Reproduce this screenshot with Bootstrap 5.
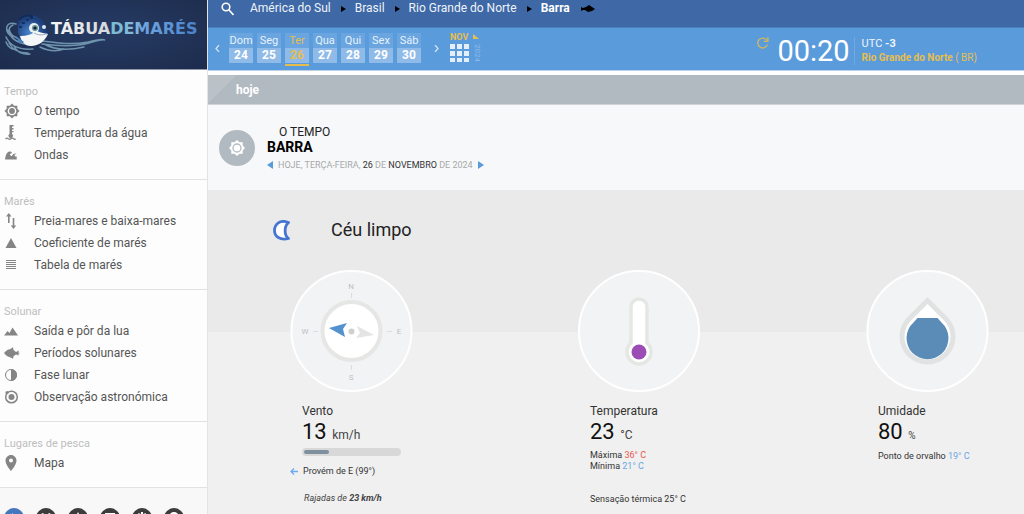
<!DOCTYPE html>
<html lang="pt">
<head>
<meta charset="utf-8">
<meta name="viewport" content="width=device-width, initial-scale=1">
<title>O tempo em Barra - Tábua de marés</title>
<link href="https://cdn.jsdelivr.net/npm/bootstrap@5.3.0/dist/css/bootstrap.min.css" rel="stylesheet">
<style>
body{font-family:Roboto,"Liberation Sans",sans-serif;font-size:12px;line-height:16px;color:#333;background:#fff}
a{color:inherit;text-decoration:none}
svg{display:block;flex:none}
/* sidebar */
.side{width:208px;background:#fdfdfd;border-right:1px solid #e4e4e6}
.brand{height:70px;background:radial-gradient(ellipse at 50% 45%,#263b64,#1d2c4d);border-bottom:1px solid #8d98ac}
.side-group{padding:14px 0 13px;border-bottom:1px solid #e2e2e2}
.side-title{font-size:11px;line-height:16px;color:#bdbdbd;padding-left:4px;font-weight:400;margin:0}
.side-link{height:22px;padding-left:4px;color:#555;gap:14px}
.side-link svg{width:16px;height:16px;fill:#858585}
.side-foot{background:#f8f8f8;padding:20px 4px;gap:12px}
.round-btn{width:20px;height:20px;border-radius:50%;background:#3c3c3c;border:0;padding:4px}
.round-btn.first{background:#4577bd}
/* top */
.crumbs{height:28px;background:#3e68a6;color:#eef3fa;padding:0 13px;border-bottom:1px solid #4c80bf}
.crumbs a,.crumbs b{line-height:16px}
.datebar{height:43px;background:#5a9bdc;padding:5px 42px 0 6px;border-bottom:1px solid #b9d2ea}
.plain-btn{border:0;background:none;padding:0;color:#fff}
.day{width:24px;text-align:center;color:#e8f2fc;border-bottom:2px solid transparent;padding-bottom:1px}
.day span{display:block;height:15px;line-height:15px;background:#6aa5df;font-size:11px;white-space:nowrap}
.day b{display:block;height:15px;line-height:15px;background:#90bbe8;color:#fff}
.day.active,.day.active b{color:#e3bd52}
.day.active{border-color:#e8bc48}
.gold{color:#e6bf4e}
.cal{margin-left:10px}
.month{font-size:9px;line-height:8px;font-weight:700;gap:3px}
.year{writing-mode:vertical-rl;font-size:8px;line-height:8px;color:#8fbbe7}
.clock{font-size:29px;line-height:36px;color:#fff}
.zone{font-size:11px;line-height:14px;color:#eef5fc;border-left:1px solid #70a9e1;padding-left:7px}
.zone .gold{font-size:10px}
.zone-wrap{padding-right:5px}
.today{height:30px;margin-top:4px;padding-left:28px;color:#fff;border-bottom:1px solid #cfd4d8;background:linear-gradient(135deg,#bac1c7 20px,#b2bac1 20px)}
.place{height:85px;background:#f6f8fa;padding:0 11px}
.place h1{font-size:12px;line-height:15px;margin:0;font-weight:400;color:#222}
.place h1 b{display:block;color:#000;font-size:14px}
.place-date{font-size:9px;line-height:12px;color:#a9a9a9}
.place-date b{font-weight:400;color:#333}
.sky{height:80px;background:#eaeaea;padding:0 65px}
.sky h2{font-size:18px;line-height:24px;font-weight:400;color:#222;margin:0}
.gauges{padding:0 35px 20px 82px;background:linear-gradient(#eaeaea 62px,#f0f0f0 62px)}
.gauge{width:123px}
.facts{padding:11px 0 0 12px}
.amount{font-size:22px;line-height:26px;color:#111}
.amount small{font-size:12px;color:#444}
.amount .tiny{font-size:10px}
.fine{font-size:9px;line-height:11px;white-space:nowrap}
.detail{margin-top:2px}
.speed{width:99px;height:8px;border-radius:4px;background:#d8d8d8;padding:2px}
.speed div{height:4px;border-radius:2px;background:#7e8f9d}
.origin{margin-top:10px}
.gusts{margin:16px 0 0 14px;color:#444}
.feels{margin-top:22px}
</style>
</head>
<body>
<div class="d-flex vh-100 overflow-hidden">
<aside class="side flex-shrink-0">
  <a class="brand d-block" href="#" aria-label="Tábua de Marés">
    <svg width="207" height="69" viewBox="0 0 207 69">
      <defs>
        <linearGradient id="lt" x1="52" x2="196" y1="0" y2="0" gradientUnits="userSpaceOnUse"><stop offset="0" stop-color="#f5f5f5"/><stop offset=".41" stop-color="#d5d6da"/><stop offset=".42" stop-color="#79bcd3"/><stop offset=".58" stop-color="#86b8dc"/><stop offset=".62" stop-color="#6fa6df"/><stop offset="1" stop-color="#4b83cc"/></linearGradient>
        <radialGradient id="fb" cx=".4" cy=".6"><stop offset="0" stop-color="#4a86d0"/><stop offset="1" stop-color="#1d3f7c"/></radialGradient>
      </defs>
      <g fill="none" stroke="#6f93ad" stroke-linecap="round">
        <path d="M16 24C4 20 4 34 13 37M13 25C6 28 10 35 17 38M8 30c2 8 10 14 24 15M6 37c4 9 12 13 27 12M9 43c4 8 11 10 19 10M14 46c3 6 8 9 16 8M6 42c2 5 6 8 9 7" stroke-width="1.500"/>
        <path d="M42 41c16 2 30 4 46 1 8-2 14-4 17-2-6-1-10 2-16 3-14 4-32 3-47 1M44 44c10 6 22 7 40 3M40 47c8 4 16 5 24 2" stroke-width="1.500"/>
      </g>
      <path d="M18 27C17 20 22 16 29 15c8-1 16 5 17 13l2 6c-4 8-14 12-21 9-7-3-10-9-9-16z" fill="url(#fb)"/>
      <path d="M20 19c3-3 8-4 12-3M23 23h1M27 20h1M31 18h1M20 27h1" stroke="#132b59" stroke-width="2" stroke-linecap="round" fill="none"/>
      <path d="M20 36c7 0 12-2 17-5 4 2 8 2 11 3-3 7-9 12-17 12-6 0-10-5-11-10z" fill="#f4f6f8"/>
      <path d="M33 32c5 4 9 3 14 2" stroke="#9aabc0" fill="none"/>
      <circle cx="34" cy="28" r="5" fill="#e9f1ee"/><circle cx="35" cy="28" r="3" fill="#6b9297"/><circle cx="35" cy="28" r="1.600" fill="#102034"/><circle cx="44" cy="27" r="2" fill="#dfe9ee"/>
      <path d="M16 36l8 6-5 1z" fill="#4a7fbd"/>
      <text x="51" y="34" font-family="DejaVu Sans, sans-serif" font-weight="700" font-size="16" fill="url(#lt)">TÁBUADEMARÉS</text>
    </svg>
  </a>
  <nav>
    <div class="side-group"><h2 class="side-title">Tempo</h2>
      <a class="side-link d-flex align-items-center" href="#"><svg viewBox="0 0 24 24"><path fill-rule="evenodd" d="M20 8.700V4h-4.700L12 .7 8.700 4H4v4.700L.7 12 4 15.300V20h4.700L12 23.300 15.300 20H20v-4.700L23.300 12 20 8.700zM12 18.500a6.500 6.500 0 1 1 0-13 6.500 6.500 0 0 1 0 13z"/><circle cx="12" cy="12" r="4.400"/></svg>O tempo</a>
      <a class="side-link d-flex align-items-center" href="#"><svg viewBox="0 0 16 16"><path d="M5.500 0h4v1.500H8v1.500h1.500v1.500H8V6h1.500v1.300H8v1.700a2.200 2.200 0 1 1-2.500 0z"/><path d="M1.500 14q1.500-1.500 2.800-.3 1.400 1.200 2.700 0t2.700 0 1.800 0" fill="none" stroke="#858585" stroke-width="1.300"/></svg>Temperatura da água</a>
      <a class="side-link d-flex align-items-center" href="#"><svg viewBox="0 0 16 16"><path d="M1 12.500C1.500 8 3 5 5.500 4.500 7.500 4.200 8 5.500 8 6.500c-1-.8-2.500 0-1.800 1.500.6 1.200 1.800 1.300 2.300.3C9 6.500 11.500 5.800 12.500 7c-1.500 0-2.300.8-1.800 1.700.5 1 1.500 1 2 .6v3.200z"/></svg>Ondas</a>
    </div>
    <div class="side-group"><h2 class="side-title">Marés</h2>
      <a class="side-link d-flex align-items-center" href="#"><svg viewBox="0 0 16 16"><path d="M4.800 0l2.700 3.500H5.600V10H4V3.500H2zM8.700 5h1.600v7.500h1.900L9.500 16l-2.700-3.500h1.900z"/></svg>Preia-mares e baixa-mares</a>
      <a class="side-link d-flex align-items-center" href="#"><svg viewBox="0 0 16 16"><path d="M7 3l5.500 10h-11z"/></svg>Coeficiente de marés</a>
      <a class="side-link d-flex align-items-center" href="#"><svg viewBox="0 0 16 16"><path d="M2 3h10v1H2zM2 5h10v1H2zM2 7h10v1H2zM2 9h10v1H2zM2 11h10v1H2z"/></svg>Tabela de marés</a>
    </div>
    <div class="side-group"><h2 class="side-title">Solunar</h2>
      <a class="side-link d-flex align-items-center" href="#"><svg viewBox="0 0 16 16"><path d="M0 12.500l3.500-4.500 2 2L8.500 4.500l5.500 8z"/></svg>Saída e pôr da lua</a>
      <a class="side-link d-flex align-items-center" href="#"><svg viewBox="0 0 16 16"><path d="M0 8c2-2.500 4-3.500 6-3.800L9 2.300l.5 2.700 2.500 2 3-1.500-.7 2 1.700.5-1.700.7.7 1.800-3-1-2.500 1.800-.5 2.400-3-1.500C4 12 2 10.500 0 8z"/></svg>Períodos solunares</a>
      <a class="side-link d-flex align-items-center" href="#"><svg viewBox="0 0 16 16"><circle cx="7" cy="8" r="5.500" fill="none" stroke="#858585"/><path d="M7 2a6 6 0 0 1 0 12z"/></svg>Fase lunar</a>
      <a class="side-link d-flex align-items-center" href="#"><svg viewBox="0 0 16 16"><circle cx="7.500" cy="8" r="5.800" fill="none" stroke="#858585" stroke-width="1.500"/><circle cx="7.500" cy="8" r="3"/><circle cx="3" cy="3.500" r="1.600"/></svg>Observação astronómica</a>
    </div>
    <div class="side-group"><h2 class="side-title">Lugares de pesca</h2>
      <a class="side-link d-flex align-items-center" href="#"><svg viewBox="0 0 16 16"><path fill-rule="evenodd" d="M7 0C4 0 1.500 2.500 1.500 5.500 1.500 10 7 16 7 16s5.500-6 5.500-10.500C12.500 2.500 10 0 7 0zm0 3.500a2 2 0 1 1 0 4 2 2 0 0 1 0-4z"/></svg>Mapa</a>
    </div>
  </nav>
  <div class="side-foot d-flex">
    <button class="round-btn first" aria-label="Início"><svg width="12" height="12" viewBox="0 0 12 12"><path d="M4 1l5 5-5 1z" fill="#fff"/></svg></button>
    <button class="round-btn" aria-label="Calendário"><svg width="12" height="12" viewBox="0 0 12 12"><path d="M1 2l2-1 1 1h4l1-1 2 1v8H1z" fill="#fff"/></svg></button>
    <button class="round-btn" aria-label="Subir"><svg width="12" height="12" viewBox="0 0 12 12"><path d="M6 0l4 8H2z" fill="#fff"/></svg></button>
    <button class="round-btn" aria-label="Mensagens"><svg width="12" height="12" viewBox="0 0 12 12"><path d="M1 1h10v7H6l-3 3V8H1z" fill="#fff"/></svg></button>
    <button class="round-btn" aria-label="Definições"><svg width="12" height="12" viewBox="0 0 12 12"><path d="M5 0h2v2l3-1-1 3h3v3H0V4h3L2 1l3 1z" fill="#fff"/></svg></button>
    <button class="round-btn" aria-label="Ajuda"><svg width="12" height="12" viewBox="0 0 12 12"><circle cx="6" cy="5" r="4" fill="none" stroke="#fff" stroke-width="2"/></svg></button>
  </div>
</aside>

<main class="flex-grow-1">
  <nav class="crumbs d-flex align-items-start" aria-label="Localização">
    <button class="plain-btn me-3" aria-label="Procurar"><svg width="13" height="16" viewBox="0 0 13 16" fill="none" stroke="#fff" stroke-width="1.600"><circle cx="5" cy="7" r="3.800"/><path d="M8 10l4.500 5"/></svg></button>
    <div class="d-flex align-items-center">
      <a href="#">América do Sul</a>
      <svg class="mx-2" width="8" height="8" viewBox="0 0 8 8"><path d="M2 2l5 3-5 3z"/></svg>
      <a href="#">Brasil</a>
      <svg class="mx-2" width="8" height="8" viewBox="0 0 8 8"><path d="M2 2l5 3-5 3z"/></svg>
      <a href="#">Rio Grande do Norte</a>
      <svg class="mx-2" width="8" height="8" viewBox="0 0 8 8"><path d="M2 2l5 3-5 3z"/></svg>
      <b class="text-white">Barra</b>
      <svg class="ms-2" width="18" height="8" viewBox="0 0 18 8"><path d="M3 3l2 1 3-1 3-2 3 2 3 2-3 2-4 1-3-2-2 0-2 1z"/></svg>
    </div>
  </nav>
  <div class="datebar d-flex align-items-start">
    <button class="plain-btn mt-2 pt-1" aria-label="Semana anterior"><svg width="7" height="7" viewBox="0 0 7 7" fill="none" stroke="#cfe2f6" stroke-width="1.300"><path d="M5 0L2 3.500 5 7"/></svg></button>
    <div class="d-flex gap-1 ms-2">
      <a class="day" href="#"><span>Dom</span><b>24</b></a>
      <a class="day" href="#"><span>Seg</span><b>25</b></a>
      <a class="day active" href="#"><span>Ter</span><b>26</b></a>
      <a class="day" href="#"><span>Qua</span><b>27</b></a>
      <a class="day" href="#"><span>Qui</span><b>28</b></a>
      <a class="day" href="#"><span>Sex</span><b>29</b></a>
      <a class="day" href="#"><span>Sáb</span><b>30</b></a>
    </div>
    <button class="plain-btn mt-2 pt-1 ms-2 ps-1" aria-label="Semana seguinte"><svg width="7" height="7" viewBox="0 0 7 7" fill="none" stroke="#cfe2f6" stroke-width="1.300"><path d="M2 0l3 3.500L2 7"/></svg></button>
    <button class="plain-btn cal d-flex" aria-label="Novembro 2024">
      <span class="d-flex flex-column month gold text-start">NOV<svg width="19" height="19" viewBox="0 0 19 19" fill="#e3eefa"><path d="M0 0h5v5H0zM7 0h5v5H7zM14 0h5v5h-5zM0 7h5v5H0zM7 7h5v5H7zM14 7h5v5h-5zM0 14h5v4H0zM7 14h5v4H7zM14 14h5v4h-5z"/></svg></span>
      <span class="ms-1"><svg class="mb-1" width="6" height="7" viewBox="0 0 6 7"><path d="M0 1l6 5H0z" fill="#e6bf4e"/></svg><span class="year">2024</span></span>
    </button>
    <div class="zone-wrap d-flex ms-auto align-items-start">
      <button class="plain-btn mt-1 me-2" aria-label="Atualizar"><svg width="12" height="12" viewBox="0 0 11 11" fill="none" stroke="#cdb65f" stroke-width="1.300"><path d="M9.500 7A4.500 4.500 0 1 1 9 3M10 0v4H6"/></svg></button>
      <time class="clock">00:20</time>
      <div class="zone ms-1 mt-1"><div>UTC <b>-3</b></div><div class="gold"><b>Rio Grande do Norte</b> ( BR)</div></div>
    </div>
  </div>
  <div class="today d-flex align-items-center"><b>hoje</b></div>
  <header class="place d-flex align-items-center gap-2">
    <svg width="36" height="36" viewBox="0 0 36 36"><circle cx="18" cy="18" r="18" fill="#b2bac1"/><path fill="#fff" d="M18 10l2.400 2.300h3.300v3.300L26 18l-2.300 2.400v3.300h-3.300L18 26l-2.400-2.300h-3.300v-3.300L10 18l2.300-2.400v-3.300h3.300z"/><circle cx="18" cy="18" r="4" fill="none" stroke="#b2bac1" stroke-width="1.300"/></svg>
    <div class="ms-1">
      <h1><span class="ms-2 ps-1">O TEMPO</span><b>BARRA</b></h1>
      <div class="place-date d-flex align-items-center mt-1 gap-1">
        <a href="#" aria-label="Dia anterior"><svg width="7" height="8" viewBox="0 0 7 8"><path d="M6 0v8L0 4z" fill="#5a9bdc"/></svg></a>
        <span>HOJE, TERÇA-FEIRA, <b>26</b> DE <b>NOVEMBRO</b> DE 2024</span>
        <a href="#" aria-label="Dia seguinte"><svg width="7" height="8" viewBox="0 0 7 8"><path d="M1 0v8l6-4z" fill="#5a9bdc"/></svg></a>
      </div>
    </div>
  </header>
  <section class="sky d-flex align-items-center">
    <svg class="me-4" width="18" height="21" viewBox="0 0 18 21"><path d="M15.500 2.500C7-1 1.500 4.500 1.500 10.500S7 20.500 15.500 18.500C11 15 11 6.500 15.500 2.500z" fill="#fff" stroke="#4775d2" stroke-width="2.800" stroke-linejoin="round"/></svg>
    <h2 class="ms-3">Céu limpo</h2>
  </section>
  <section class="gauges d-flex justify-content-between">
    <article class="gauge">
      <svg width="123" height="122" viewBox="0 0 123 122"><circle cx="61.500" cy="61" r="60" fill="#f2f3f5" stroke="#fff" stroke-width="2"/><circle cx="61.500" cy="61" r="29" fill="#fff" stroke="#e6e6e5" stroke-width="4"/><path d="M39 58l18-5-4 6 2 8z" fill="#5391cf"/><path d="M84 65l-17-9 3 7-4 5z" fill="#e4e4e4"/><circle cx="61.500" cy="61.500" r="3" fill="#cfcfcf"/><path d="M61.500 23v5M61.500 95v5M23 61.500h5M97 61.500h5" stroke="#dcdcdc"/><g font-size="8" fill="#bfbfbf" text-anchor="middle"><text x="61" y="19">N</text><text x="61" y="110">S</text><text x="15" y="64">W</text><text x="109" y="64">E</text></g></svg>
      <div class="facts"><div>Vento</div><div class="amount">13 <small>km/h</small></div>
        <div class="speed" role="progressbar" aria-label="Velocidade do vento" aria-valuenow="13" aria-valuemin="0" aria-valuemax="50"><div style="width:26%"></div></div></div>
      <div class="fine origin d-flex align-items-center gap-1"><svg width="9" height="9" viewBox="0 0 9 9" fill="none" stroke="#6faaf0" stroke-width="1.300"><path d="M8 4.500H1M4 1.500l-3 3 3 3"/></svg><span>Provém de E (99°)</span></div>
      <div class="fine fst-italic gusts">Rajadas de <b>23 km/h</b></div>
    </article>
    <article class="gauge">
      <svg width="123" height="122" viewBox="0 0 123 122"><circle cx="61" cy="61" r="60" fill="#f2f3f5" stroke="#fff" stroke-width="2"/><path d="M53 73V37a8 8 0 0 1 16 0v36a12 12 0 1 1-16 0z" fill="#fff" stroke="#e6e6e5" stroke-width="3.500"/><circle cx="61" cy="82" r="7.500" fill="#9c4db5"/></svg>
      <div class="facts"><div>Temperatura</div><div class="amount">23 <small>°C</small></div>
        <div class="fine detail">Máxima <span style="color:#e8574f">36° C</span></div><div class="fine">Mínima <span style="color:#68a5e2">21° C</span></div>
        <div class="fine feels">Sensação térmica 25° C</div></div>
    </article>
    <article class="gauge">
      <svg width="123" height="122" viewBox="0 0 123 122"><circle cx="61.500" cy="61" r="60" fill="#f2f3f5" stroke="#fff" stroke-width="2"/><path d="M61.500 30.500l18 18a25.500 25.500 0 1 1-36 0z" fill="#fff" stroke="#e1e3e3" stroke-width="5"/><path d="M51.500 48h20l4 4.500a21 21 0 1 1-28 0z" fill="#5b8bb7"/></svg>
      <div class="facts"><div>Umidade</div><div class="amount">80 <small class="tiny">%</small></div>
        <div class="fine detail">Ponto de orvalho <span style="color:#68a5e2">19° C</span></div></div>
    </article>
  </section>
</main>
</div>
<script src="https://cdn.jsdelivr.net/npm/bootstrap@5.3.0/dist/js/bootstrap.bundle.min.js"></script>
</body>
</html>
